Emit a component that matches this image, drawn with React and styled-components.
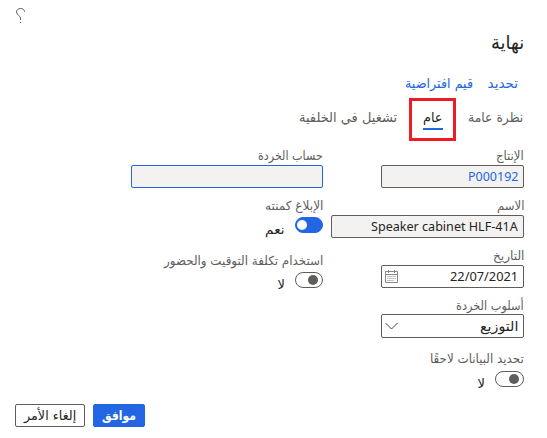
import React, { useLayoutEffect, useRef, useState } from "react";
import styled, { createGlobalStyle } from "styled-components";

const Global = createGlobalStyle`
  * { box-sizing: border-box; }
  body { margin: 0; background: #fff; font-family: "DejaVu Sans", sans-serif; color: #252423; }
`;

const Page = styled.main`
  width: 547px;
  height: 438px;
  overflow: hidden;
  display: flex;
  flex-direction: column;
  background: #fff;
`;
const TopBar = styled.header`
  display: flex;
  justify-content: flex-end;
  height: 30px;
  padding: 7px 0 0 15px;
`;
const Heading = styled.h1`
  display: flex;
  align-items: center;
  height: 24px;
  margin: 0 23px 0 0;
  font-weight: 400;
`;
const Actions = styled.nav`
  display: flex;
  align-items: center;
  gap: 15px;
  height: 24px;
  margin: 17px 29px 0 0;
`;
const Tabs = styled.nav`
  display: flex;
  align-items: flex-start;
  height: 44px;
  margin: 3px 24px 0 0;
`;
const Tab = styled.div`
  display: flex;
  align-items: center;
  height: 100%;
  padding-bottom: 6px;
`;
const ActiveTab = styled.div`
  display: flex;
  flex-direction: column;
  align-items: center;
  width: 47px;
  height: 43px;
  margin: 0 12px 0 12px;
  border: 3px solid #ed1c24;
  padding-top: 8px;
`;
const Underline = styled.span`
  width: 20px;
  height: 2px;
  margin-top: 2px;
  background: #2266e3;
`;
const Form = styled.section`
  display: flex;
  gap: 8px;
  height: 262px;
  padding: 6px 23px 0 0;
`;
const Column = styled.div`
  display: flex;
  flex-direction: column;
  width: ${(p) => p.$width}px;
`;
const Field = styled.div`
  display: flex;
  flex: none;
  flex-direction: column;
  height: ${(p) => p.$height || 50}px;
`;
const Label = styled.div`
  display: flex;
  align-items: center;
  height: 17px;
  padding-bottom: 2px;
  margin-bottom: ${(p) => p.$gap ?? 0}px;
`;
const Input = styled.div`
  display: flex;
  align-items: center;
  justify-content: space-between;
  width: ${(p) => p.$width}px;
  height: ${(p) => p.$height || 23}px;
  padding: 0 5px 0 3px;
  border: 1px solid ${(p) => (p.$focus ? "#2266e3" : "#605e5c")};
  border-radius: 2px;
  background: ${(p) => (p.$readOnly ? "#f3f2f1" : "#fff")};
`;
const ToggleRow = styled.div`
  display: flex;
  align-items: flex-start;
  gap: 10px;
`;
const Switch = styled.span`
  display: flex;
  align-items: center;
  justify-content: ${(p) => (p.$on ? "flex-end" : "flex-start")};
  width: ${(p) => p.$width || 28}px;
  height: 16px;
  padding: 0 ${(p) => (p.$on ? 1 : 4)}px;
  border: 1px solid ${(p) => (p.$on ? "#2266e3" : "#605e5c")};
  border-radius: 8px;
  background: ${(p) => (p.$on ? "#2266e3" : "#fff")};
  &::before {
    content: "";
    width: 10px;
    height: 10px;
    border-radius: 50%;
    background: ${(p) => (p.$on ? "#fff" : "#605e5c")};
  }
`;
const State = styled.span`
  display: flex;
  height: 17px;
  margin-top: 4px;
`;
const Footer = styled.footer`
  display: flex;
  justify-content: flex-end;
  gap: 8px;
  padding-left: 15px;
`;
const Button = styled.button`
  display: flex;
  align-items: center;
  justify-content: center;
  width: ${(p) => p.$width}px;
  height: 23px;
  padding: 0;
  border: 1px solid ${(p) => (p.$primary ? "#2266e3" : "#605e5c")};
  border-radius: 2px;
  background: ${(p) => (p.$primary ? "#2266e3" : "#fff")};
  font-family: inherit;
`;
const TextBox = styled.span`
  display: inline-flex;
  flex: none;
  width: ${(p) => p.$width}px;
  font-family: ${(p) => (p.$ltr ? '"Noto Sans", sans-serif' : '"DejaVu Sans", sans-serif')};
  font-size: ${(p) => p.$size}px;
  line-height: 17px;
  font-weight: ${(p) => p.$weight};
  color: ${(p) => p.$color};
  direction: ${(p) => (p.$ltr ? "ltr" : "rtl")};
  white-space: nowrap;
`;
const Glyphs = styled.span`
  flex: none;
  transform-origin: ${(p) => (p.$ltr ? "left" : "right")} center;
`;

function Text({ width, size = 12.5, weight = 400, color = "#605e5c", ltr = false, children }) {
  const ref = useRef(null);
  const [scale, setScale] = useState(1);
  useLayoutEffect(() => {
    setScale(width / ref.current.offsetWidth);
  }, [width, children]);
  return (
    <TextBox $width={width} $size={size} $weight={weight} $color={color} $ltr={ltr}>
      <Glyphs ref={ref} $ltr={ltr} style={{ transform: `scaleX(${scale})` }}>{children}</Glyphs>
    </TextBox>
  );
}

const HelpIcon = () => (
  <svg width="11" height="17" viewBox="0 0 11 17" fill="none" stroke="#605e5c" strokeWidth="1">
    <path d="M9.5 4.8C9.5 2.7 7.8 1.5 5.6 1.5C3.2 1.5 1.5 3 1.5 5.1C1.5 8.1 5.5 8.6 5.5 11V13" />
    <path d="M5.5 15V16" />
  </svg>
);
const CalendarIcon = () => (
  <svg width="13" height="13" viewBox="0 0 13 13" fill="none" stroke="#8a8886">
    <path d="M.5 1.5H12.5V12.5H.5ZM.5 4.5H12.5M3.5 0V3M9.5 0V3" />
    <path d="M2.5 6.5H11M2.5 8.5H11M2.5 10.5H9" strokeDasharray="1 1" />
  </svg>
);
const Chevron = () => (
  <svg width="13" height="8" viewBox="0 0 13 8" fill="none" stroke="#484644">
    <path d="M.5 1L6.5 7L12.5 1" />
  </svg>
);

const dark = "#252423";
const blue = "#2266e3";

export default function App() {
  return (
    <>
      <Global />
      <Page dir="rtl">
        <TopBar><HelpIcon /></TopBar>
        <Heading><Text width={33} size={19} weight={500} color={dark}>نهاية</Text></Heading>
        <Actions>
          <Text width={30} size={13.5} color={blue}>تحديد</Text>
          <Text width={68} size={13.5} color={blue}>قيم افتراضية</Text>
        </Actions>
        <Tabs>
          <Tab><Text width={55} size={13.5}>نظرة عامة</Text></Tab>
          <ActiveTab>
            <Text width={20} size={13.5} color={dark}>عام</Text>
            <Underline />
          </ActiveTab>
          <Tab><Text width={98} size={13.5}>تشغيل في الخلفية</Text></Tab>
        </Tabs>
        <Form>
          <Column $width={193}>
            <Field>
              <Label><Text width={28}>الإنتاج</Text></Label>
              <Input $width={143} $readOnly>
                <Text width={50} size={13} color={blue} ltr>P000192</Text>
              </Input>
            </Field>
            <Field>
              <Label><Text width={27}>الاسم</Text></Label>
              <Input $width={193} $readOnly>
                <Text width={147} size={13} color={dark} ltr>Speaker cabinet HLF-41A</Text>
              </Input>
            </Field>
            <Field>
              <Label><Text width={31}>التاريخ</Text></Label>
              <Input $width={143}>
                <Text width={68} size={13} color={dark} ltr>22/07/2021</Text>
                <CalendarIcon />
              </Input>
            </Field>
            <Field $height={53}>
              <Label $gap={-1}><Text width={68}>أسلوب الخردة</Text></Label>
              <Input $width={143} $height={24}>
                <Text width={38} size={13.5} color={dark}>التوزيع</Text>
                <Chevron />
              </Input>
            </Field>
            <Field>
              <Label $gap={3}><Text width={94}>تحديد البيانات لاحقًا</Text></Label>
              <ToggleRow>
                <Switch $width={29} />
                <State><Text width={7} size={13} color={dark}>لا</Text></State>
              </ToggleRow>
            </Field>
          </Column>
          <Column $width={192}>
            <Field>
              <Label><Text width={65}>حساب الخردة</Text></Label>
              <Input $width={192} $readOnly $focus />
            </Field>
            <Field $height={55}>
              <Label $gap={2}><Text width={58}>الإبلاغ كمنته</Text></Label>
              <ToggleRow>
                <Switch $on />
                <State><Text width={20} size={13} color={dark}>نعم</Text></State>
              </ToggleRow>
            </Field>
            <Field>
              <Label $gap={2}><Text width={159}>استخدام تكلفة التوقيت والحضور</Text></Label>
              <ToggleRow>
                <Switch />
                <State><Text width={7} size={13} color={dark}>لا</Text></State>
              </ToggleRow>
            </Field>
          </Column>
        </Form>
        <Footer>
          <Button $width={52} $primary><Text width={34} size={13} weight={700} color="#fff">موافق</Text></Button>
          <Button $width={70}><Text width={52} size={13} color={dark}>إلغاء الأمر</Text></Button>
        </Footer>
      </Page>
    </>
  );
}
